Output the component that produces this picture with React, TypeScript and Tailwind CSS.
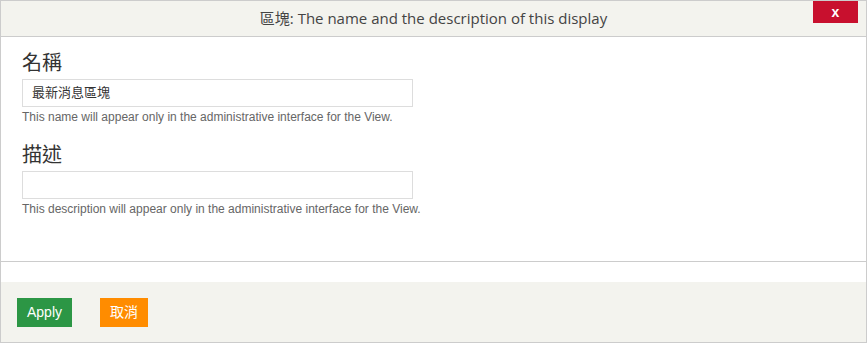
export default function App() {
  return (
    <div className="w-[867px] h-[343px] bg-white border border-[#cccccc] flex flex-col box-border overflow-hidden">
      <div className="relative h-[36px] shrink-0 bg-[#f3f3ee] border-b border-[#cccccc] flex items-center justify-center">
        <span className="text-[15px] text-[#444] font-['Open_Sans','Noto_Sans_CJK_TC',sans-serif]">
          區塊: The name and the description of this display
        </span>
        <button className="absolute right-[8px] top-0 w-[45px] h-[22px] bg-[#c8102e] text-white text-[14px] font-bold font-['Liberation_Sans',sans-serif] flex items-center justify-center">
          x
        </button>
      </div>
      <div className="flex-1 border-b border-[#cccccc] px-[21px] pt-[12px] font-['Liberation_Sans','Noto_Sans_CJK_TC',sans-serif]">
        <div className="text-[20px] leading-[28px] text-[#333]">名稱</div>
        <div className="mt-[2px] w-[391px] h-[28px] border border-[#dddddd] flex items-center px-[9px] text-[13px] text-[#333]">
          最新消息區塊
        </div>
        <div className="mt-[3px] text-[12px] leading-[14px] text-[#666]">
          This name will appear only in the administrative interface for the View.
        </div>
        <div className="mt-[17px] text-[20px] leading-[28px] text-[#333]">描述</div>
        <div className="mt-[2px] w-[391px] h-[28px] border border-[#dddddd]"></div>
        <div className="mt-[3px] text-[12px] leading-[14px] text-[#666]">
          This description will appear only in the administrative interface for the View.
        </div>
      </div>
      <div className="h-[20px] shrink-0"></div>
      <div className="h-[60px] shrink-0 bg-[#f3f3ee] flex items-center pl-[16px] gap-[28px] font-['Liberation_Sans','Noto_Sans_CJK_TC',sans-serif]">
        <button className="h-[29px] px-[10px] bg-[#2c9645] text-white text-[14px]">Apply</button>
        <button className="h-[29px] px-[10px] bg-[#ff8c00] text-white text-[14px]">取消</button>
      </div>
    </div>
  );
}
